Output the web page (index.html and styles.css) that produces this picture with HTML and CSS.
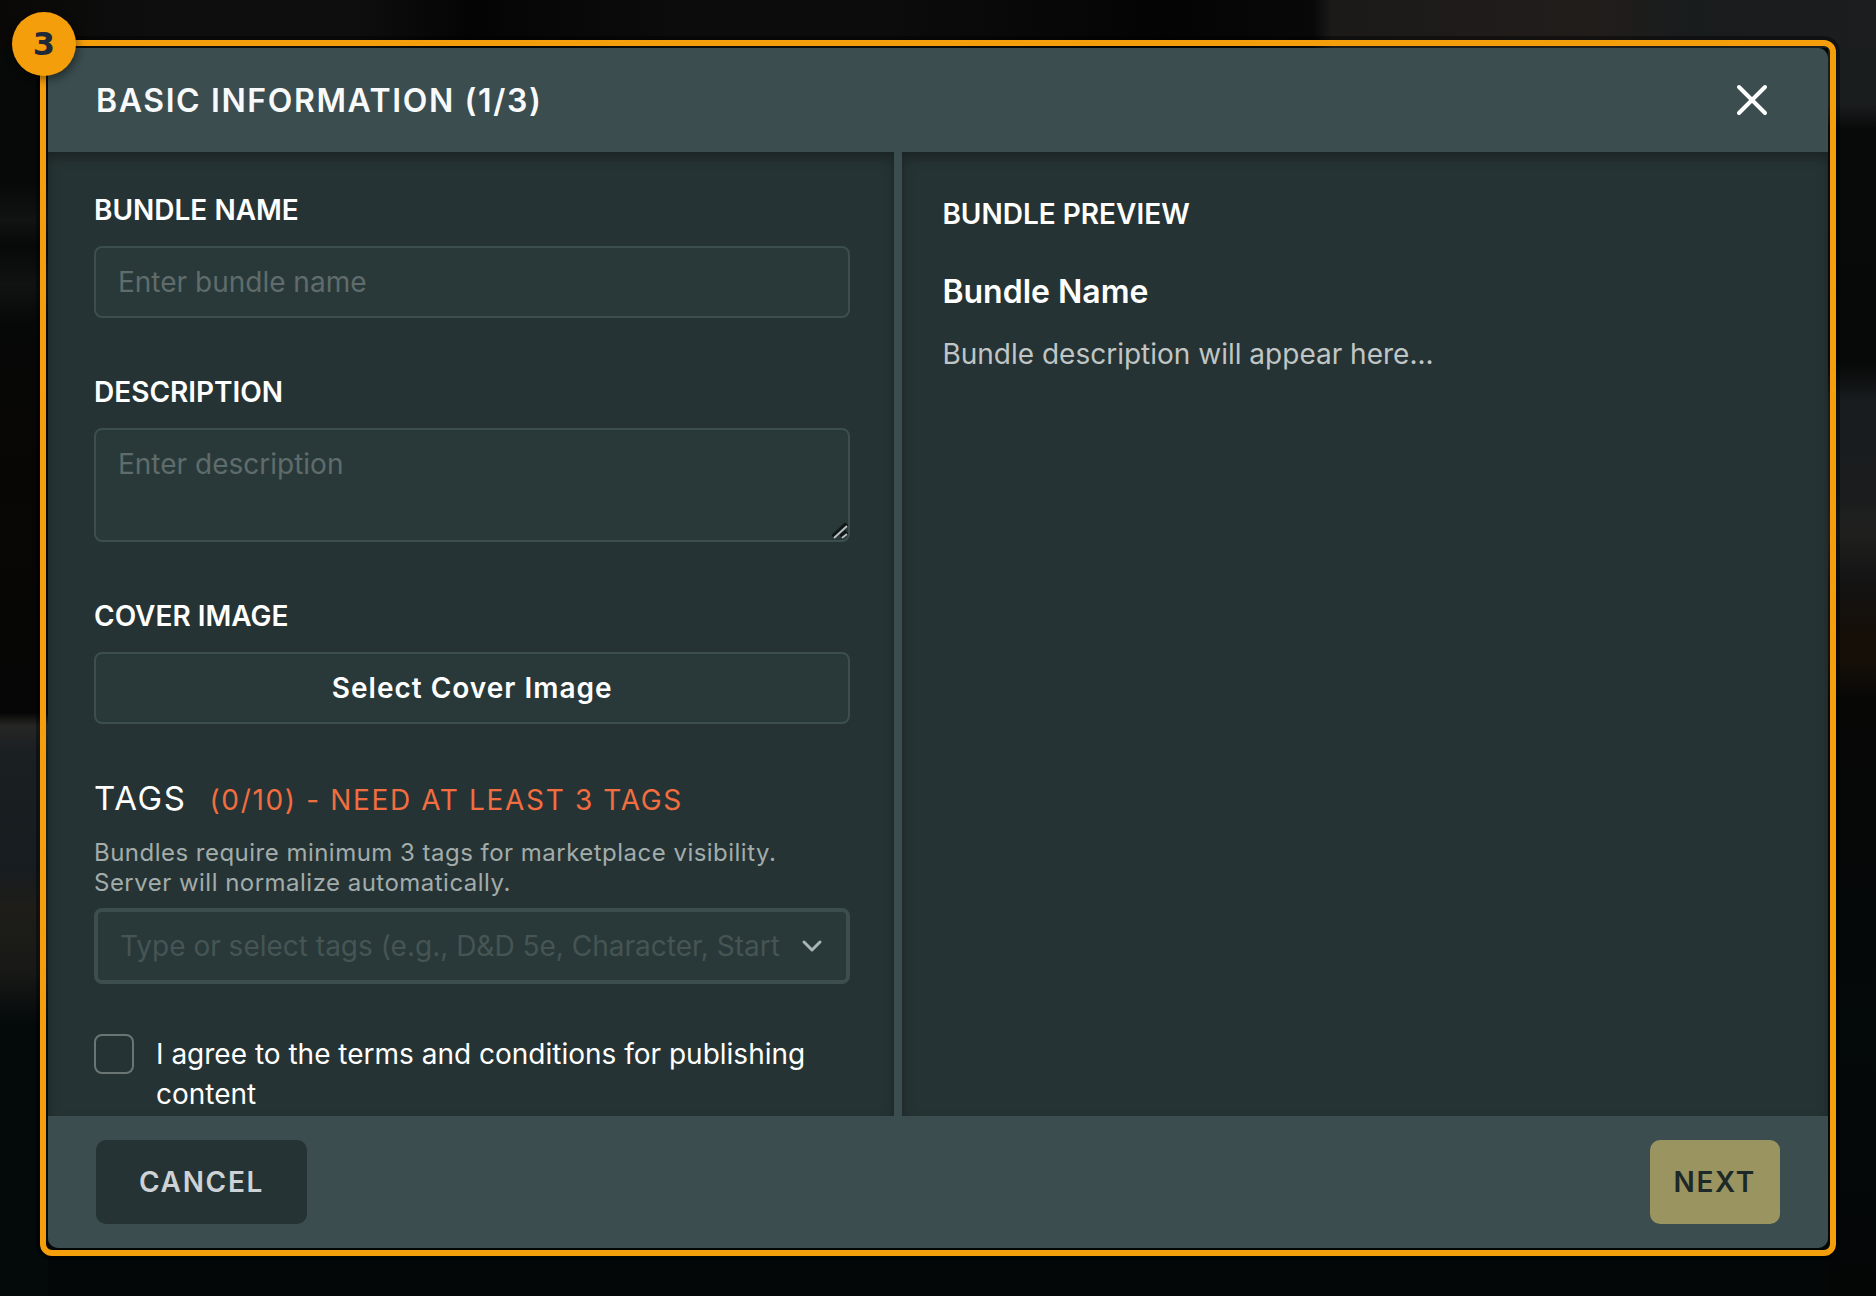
FILE: index.html
```html
<!DOCTYPE html>
<html lang="en">
<head>
    <meta charset="UTF-8">
    <meta name="viewport" content="width=device-width, initial-scale=1.0">
    <title>Basic Information</title>
    <link rel="stylesheet" href="styles.css">
</head>
<body>
    <div class="modal" role="dialog" aria-labelledby="modalTitle">
        <span class="step-badge">3</span>
        <header class="modal-header">
            <h1 id="modalTitle">BASIC INFORMATION (1/3)</h1>
            <button class="close-btn" type="button" aria-label="Close">
                <svg width="32" height="32" viewBox="0 0 32 32" fill="none" stroke="#ffffff" stroke-width="4" stroke-linecap="round">
                    <path d="M3 3 L29 29 M29 3 L3 29"/>
                </svg>
            </button>
        </header>
        <main class="modal-body">
            <form class="form-panel" id="bundleForm">
                <div class="field">
                    <label for="bundleName">BUNDLE NAME</label>
                    <input class="control" type="text" id="bundleName" placeholder="Enter bundle name">
                </div>
                <div class="field">
                    <label for="description">DESCRIPTION</label>
                    <div class="textarea-wrap">
                        <textarea class="control" id="description" placeholder="Enter description"></textarea>
                        <svg class="grip" width="16" height="16" viewBox="0 0 16 16" fill="none">
                            <path d="M1 14 L15 1 M9 14 L15 9" stroke="#0e1616" stroke-width="5"/>
                            <path d="M2 15 L15 3 M10 15 L15 11" stroke="#b9bfbf" stroke-width="2"/>
                        </svg>
                    </div>
                </div>
                <div class="field">
                    <label for="coverImage">COVER IMAGE</label>
                    <button class="control cover-btn" type="button" id="coverImage">Select Cover Image</button>
                </div>
                <div class="tags">
                    <label class="tags-label" for="tagInput">TAGS <span class="tags-count">(0/10) - NEED AT LEAST 3 TAGS</span></label>
                    <p class="help">Bundles require minimum 3 tags for marketplace visibility. Server will normalize automatically.</p>
                    <div class="tag-box">
                        <input type="text" id="tagInput" placeholder="Type or select tags (e.g., D&amp;D 5e, Character, Starter)">
                        <button class="tag-toggle" type="button" aria-label="Show tags">
                            <svg width="24" height="24" viewBox="0 0 24 24" fill="none" stroke="#a9b6b6" stroke-width="3" stroke-linecap="round" stroke-linejoin="round">
                                <path d="M4 8 L12 16 L20 8"/>
                            </svg>
                        </button>
                    </div>
                </div>
                <div class="terms">
                    <input type="checkbox" id="terms">
                    <label for="terms">I agree to the terms and conditions for publishing content</label>
                </div>
            </form>
            <section class="preview-panel">
                <h2>BUNDLE PREVIEW</h2>
                <h3>Bundle Name</h3>
                <p>Bundle description will appear here...</p>
            </section>
        </main>
        <footer class="modal-footer">
            <button class="btn cancel-btn" type="button">CANCEL</button>
            <button class="btn next-btn" type="submit" form="bundleForm">NEXT</button>
        </footer>
    </div>
</body>
</html>
```
FILE: styles.css
```css
* {
    box-sizing: border-box;
}
body {
    margin: 0;
    padding: 48px;
    height: 100vh;
    font-family: Inter, "Liberation Sans", sans-serif;
    font-size: 28px;
    color: #ffffff;
    background-color: #040707;
    /* dimmed page behind the dialog: top, left and right edges */
    background-image:
        linear-gradient(to right, #090807, #0e0e0e 8%, #0e0e0e 19%, #050404 25%, #0d0c0c 36%, #0d0c0c 47%, #050404 62%, #090808 70%, #1b1a19 71%, #211d1b 85%, #191c1d 90%, #1b1d1e),
        linear-gradient(#070808, #070808 14%, #111212 17%, #070808 19%, #111212 22%, #060707 25%, #080605 36%, #060606 55%, #262625 56%, #1a1f22 58%, #171c20 67%, #1e1d18 70%, #181917 75%, #04090a 79%, #04090a),
        linear-gradient(#1f1e1d, #1a1d1e 3%, #1a1d1e 8%, #080909 10%, #070808 28%, #181c1e 31%, #1a1c1d 38%, #20201f 41%, #131313 45%, #160f08 49%, #160f08 51%, #070706 54%, #04090a 80%, #040606);
    background-position: 0 0, 0 0, 100% 0;
    background-size: 100% 48px, 48px 100%, 48px 100%;
    background-repeat: no-repeat;
}
h1, h2, h3, p {
    margin: 0;
}
button, input, textarea {
    font-family: inherit;
    font-size: inherit;
    color: inherit;
}
button {
    cursor: pointer;
}

.modal {
    position: relative;
    display: flex;
    flex-direction: column;
    height: 100%;
    border-radius: 10px;
    background-color: #263334;
}
/* highlight frame around the dialog */
.modal::before {
    content: "";
    position: absolute;
    inset: -8px;
    border: 6px solid #f59e0b;
    border-radius: 12px;
    box-shadow: 0 0 0 4px rgba(0, 0, 0, 0.4);
    pointer-events: none;
}
.step-badge {
    position: absolute;
    top: -36px;
    left: -36px;
    width: 64px;
    height: 64px;
    border-radius: 50%;
    background-color: #f59e0b;
    color: #1f2937;
    font-family: "DejaVu Sans", sans-serif;
    font-size: 32px;
    font-weight: bold;
    line-height: 64px;
    text-align: center;
    box-shadow: 2px 4px 8px rgba(0, 0, 0, 0.4);
}

.modal-header {
    display: flex;
    align-items: center;
    justify-content: space-between;
    flex: none;
    height: 104px;
    padding: 0 48px;
    border-radius: 10px 10px 0 0;
    background-color: #3b4d4f;
}
.modal-header h1 {
    font-size: 32px;
    font-weight: 600;
    letter-spacing: 0.05em;
    color: #f8f9fb;
}
.close-btn {
    display: flex;
    padding: 12px;
    border: none;
    background: none;
}

.modal-body {
    display: flex;
    flex: 1;
    min-height: 0;
}
.form-panel {
    width: 48%;
    padding: 38px 44px 0 46px;
    border-right: 8px solid #3b4d4e;
    overflow: hidden;
    box-shadow: inset 0 6px 12px rgba(0, 0, 0, 0.3);
}
.preview-panel {
    flex: 1;
    padding: 42px 40px;
    box-shadow: inset 0 6px 12px rgba(0, 0, 0, 0.3);
}

.field {
    display: flex;
    flex-direction: column;
    margin-bottom: 54px;
}
.field label {
    margin-bottom: 16px;
    font-weight: 600;
    line-height: 40px;
}
.control {
    width: 100%;
    height: 72px;
    padding: 0 22px;
    border: 2px solid #3d4e4f;
    border-radius: 8px;
    background-color: #293939;
}
.control::placeholder {
    color: #5f6c6b;
}
.textarea-wrap {
    position: relative;
    display: flex;
}
textarea.control {
    height: 114px;
    padding: 16px 22px;
    line-height: 36px;
    resize: none;
}
.grip {
    position: absolute;
    right: 2px;
    bottom: 3px;
    pointer-events: none;
}
.cover-btn {
    font-weight: 600;
    letter-spacing: 1px;
}

.tags-label {
    display: block;
    font-size: 33px;
    line-height: 40px;
    letter-spacing: 0.05em;
}
.tags-count {
    margin-left: 12px;
    font-size: 28px;
    color: #f26d40;
}
.help {
    margin: 18px 0 10px;
    font-size: 24px;
    line-height: 30px;
    letter-spacing: 0.02em;
    color: #a2acab;
}
.tag-box {
    display: flex;
    align-items: center;
    height: 76px;
    padding: 0 22px;
    border: 4px solid #3d4e4f;
    border-radius: 8px;
    background-color: #293939;
}
.tag-box input {
    flex: 1;
    min-width: 0;
    padding: 0;
    border: none;
    outline: none;
    background: none;
}
.tag-box input::placeholder {
    color: #455554;
}
.tag-toggle {
    display: flex;
    margin-left: 20px;
    padding: 0;
    border: none;
    background: none;
}

.terms {
    display: flex;
    align-items: flex-start;
    gap: 22px;
    margin-top: 50px;
}
.terms input {
    appearance: none;
    flex: none;
    width: 40px;
    height: 40px;
    margin: 0;
    border: 2px solid #6a7574;
    border-radius: 8px;
}
.terms label {
    line-height: 40px;
}

.preview-panel h2 {
    font-size: 28px;
    font-weight: 600;
    line-height: 40px;
}
.preview-panel h3 {
    margin-top: 38px;
    font-size: 32px;
    font-weight: 600;
    line-height: 40px;
}
.preview-panel p {
    margin-top: 22px;
    line-height: 40px;
    color: #c0c5c5;
}

.modal-footer {
    display: flex;
    align-items: center;
    justify-content: space-between;
    flex: none;
    height: 132px;
    padding: 0 48px;
    border-radius: 0 0 10px 10px;
    background-color: #3b4d4f;
}
.btn {
    height: 84px;
    border: none;
    border-radius: 10px;
    font-weight: 600;
    letter-spacing: 0.06em;
}
.cancel-btn {
    padding: 0 43px;
    background-color: #263334;
    color: #ccd2d5;
}
.next-btn {
    padding: 0 24px;
    background-color: #9a9560;
    color: #1d2829;
}
```
